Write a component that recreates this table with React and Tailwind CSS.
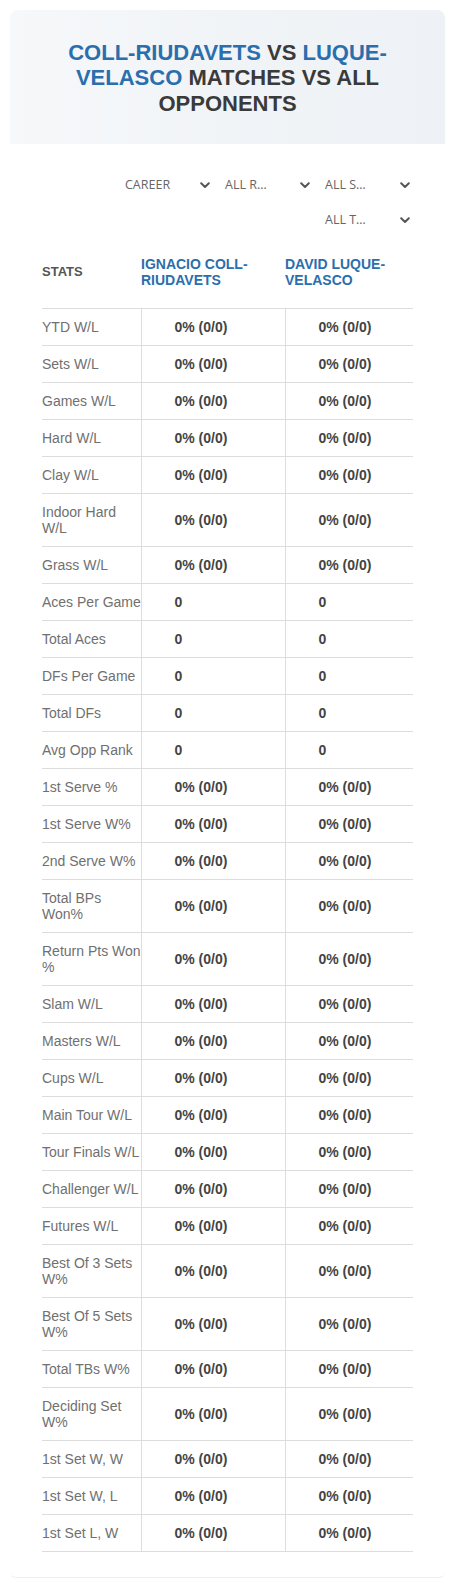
import React from "react";

const rows = [
  ["YTD W/L", "0% (0/0)"],
  ["Sets W/L", "0% (0/0)"],
  ["Games W/L", "0% (0/0)"],
  ["Hard W/L", "0% (0/0)"],
  ["Clay W/L", "0% (0/0)"],
  ["Indoor Hard W/L", "0% (0/0)"],
  ["Grass W/L", "0% (0/0)"],
  ["Aces Per Game", "0", true],
  ["Total Aces", "0"],
  ["DFs Per Game", "0"],
  ["Total DFs", "0"],
  ["Avg Opp Rank", "0"],
  ["1st Serve %", "0% (0/0)"],
  ["1st Serve W%", "0% (0/0)"],
  ["2nd Serve W%", "0% (0/0)"],
  ["Total BPs Won%", "0% (0/0)"],
  ["Return Pts Won %", "0% (0/0)"],
  ["Slam W/L", "0% (0/0)"],
  ["Masters W/L", "0% (0/0)"],
  ["Cups W/L", "0% (0/0)"],
  ["Main Tour W/L", "0% (0/0)"],
  ["Tour Finals W/L", "0% (0/0)", true],
  ["Challenger W/L", "0% (0/0)", true],
  ["Futures W/L", "0% (0/0)"],
  ["Best Of 3 Sets W%", "0% (0/0)"],
  ["Best Of 5 Sets W%", "0% (0/0)"],
  ["Total TBs W%", "0% (0/0)"],
  ["Deciding Set W%", "0% (0/0)"],
  ["1st Set W, W", "0% (0/0)"],
  ["1st Set W, L", "0% (0/0)"],
  ["1st Set L, W", "0% (0/0)"],
];

function Chevron() {
  return (
    <svg width="10" height="7" viewBox="0 0 10 7" className="shrink-0">
      <path d="M1.2 1.3 L5 5 L8.8 1.3" fill="none" stroke="#555" strokeWidth="2" strokeLinecap="round" strokeLinejoin="round" />
    </svg>
  );
}

function Select({ label }) {
  return (
    <div className="w-[100px] h-[35px] flex items-center justify-between pl-[12px] pr-[3px]">
      <span className="text-[12.5px] text-[#666] font-['Open_Sans',sans-serif]">{label}</span>
      <Chevron />
    </div>
  );
}

function Label({ text }) {
  if (text === "Return Pts Won %") {
    return (
      <>
        <span className="whitespace-nowrap">Return Pts Won</span> %
      </>
    );
  }
  return text;
}

export default function App() {
  return (
    <div className="bg-white min-h-[1586px] pt-[10px] px-[10px] font-['Liberation_Sans',Arial,sans-serif]">
      <div className="rounded-t-[8px] bg-gradient-to-r from-[#f6f8fa] via-[#f1f4f7] to-[#eef2f6] h-[134px] flex items-center justify-center px-[20px] pt-[2px]">
        <h1 className="text-center font-bold text-[22px] leading-[25.5px] uppercase text-[#3a3a3a]">
          <span className="text-[#2b6ead]">Coll-Riudavets</span> vs{" "}
          <span className="text-[#2b6ead]">Luque-Velasco</span> Matches vs All Opponents
        </h1>
      </div>
      <div className="border-b border-[#efefef] rounded-b-[6px] px-[32px] pt-[24px] pb-[25px]">
        <div className="flex flex-wrap justify-end">
          <Select label="CAREER" />
          <Select label="ALL R…" />
          <Select label="ALL S…" />
          <Select label="ALL T…" />
        </div>
        <table className="w-[371px] border-collapse table-fixed">
          <colgroup>
            <col className="w-[99px]" />
            <col className="w-[144px]" />
            <col className="w-[128px]" />
          </colgroup>
          <thead>
            <tr className="border-b border-[#dddddd]">
              <th className="h-[70px] pb-[1px] align-middle text-left text-[13px] font-bold text-[#555] leading-[16px]">STATS</th>
              <th className="h-[70px] pb-[1px] align-middle text-left text-[14px] font-bold text-[#2b6ead] leading-[16px]">IGNACIO COLL-RIUDAVETS</th>
              <th className="h-[70px] pb-[1px] align-middle text-left text-[14px] font-bold text-[#2b6ead] leading-[16px]">DAVID LUQUE-VELASCO</th>
            </tr>
          </thead>
          <tbody>
            {rows.map(([label, val, nowrap]) => (
              <tr key={label} className="border-b border-[#dddddd]">
                <td className={nowrap ? "py-[10px] pr-0 text-[14px] leading-[16px] text-[#707070] align-middle whitespace-nowrap overflow-visible" : "py-[10px] pr-0 text-[14px] leading-[16px] text-[#707070] align-middle"}>
                  <Label text={label} />
                </td>
                <td className="py-[10px] pl-[33px] border-l border-[#dddddd] text-[14px] leading-[16px] font-bold text-[#444] align-middle">{val}</td>
                <td className="py-[10px] pl-[33px] border-l border-[#dddddd] text-[14px] leading-[16px] font-bold text-[#444] align-middle">{val}</td>
              </tr>
            ))}
          </tbody>
        </table>
      </div>
    </div>
  );
}
